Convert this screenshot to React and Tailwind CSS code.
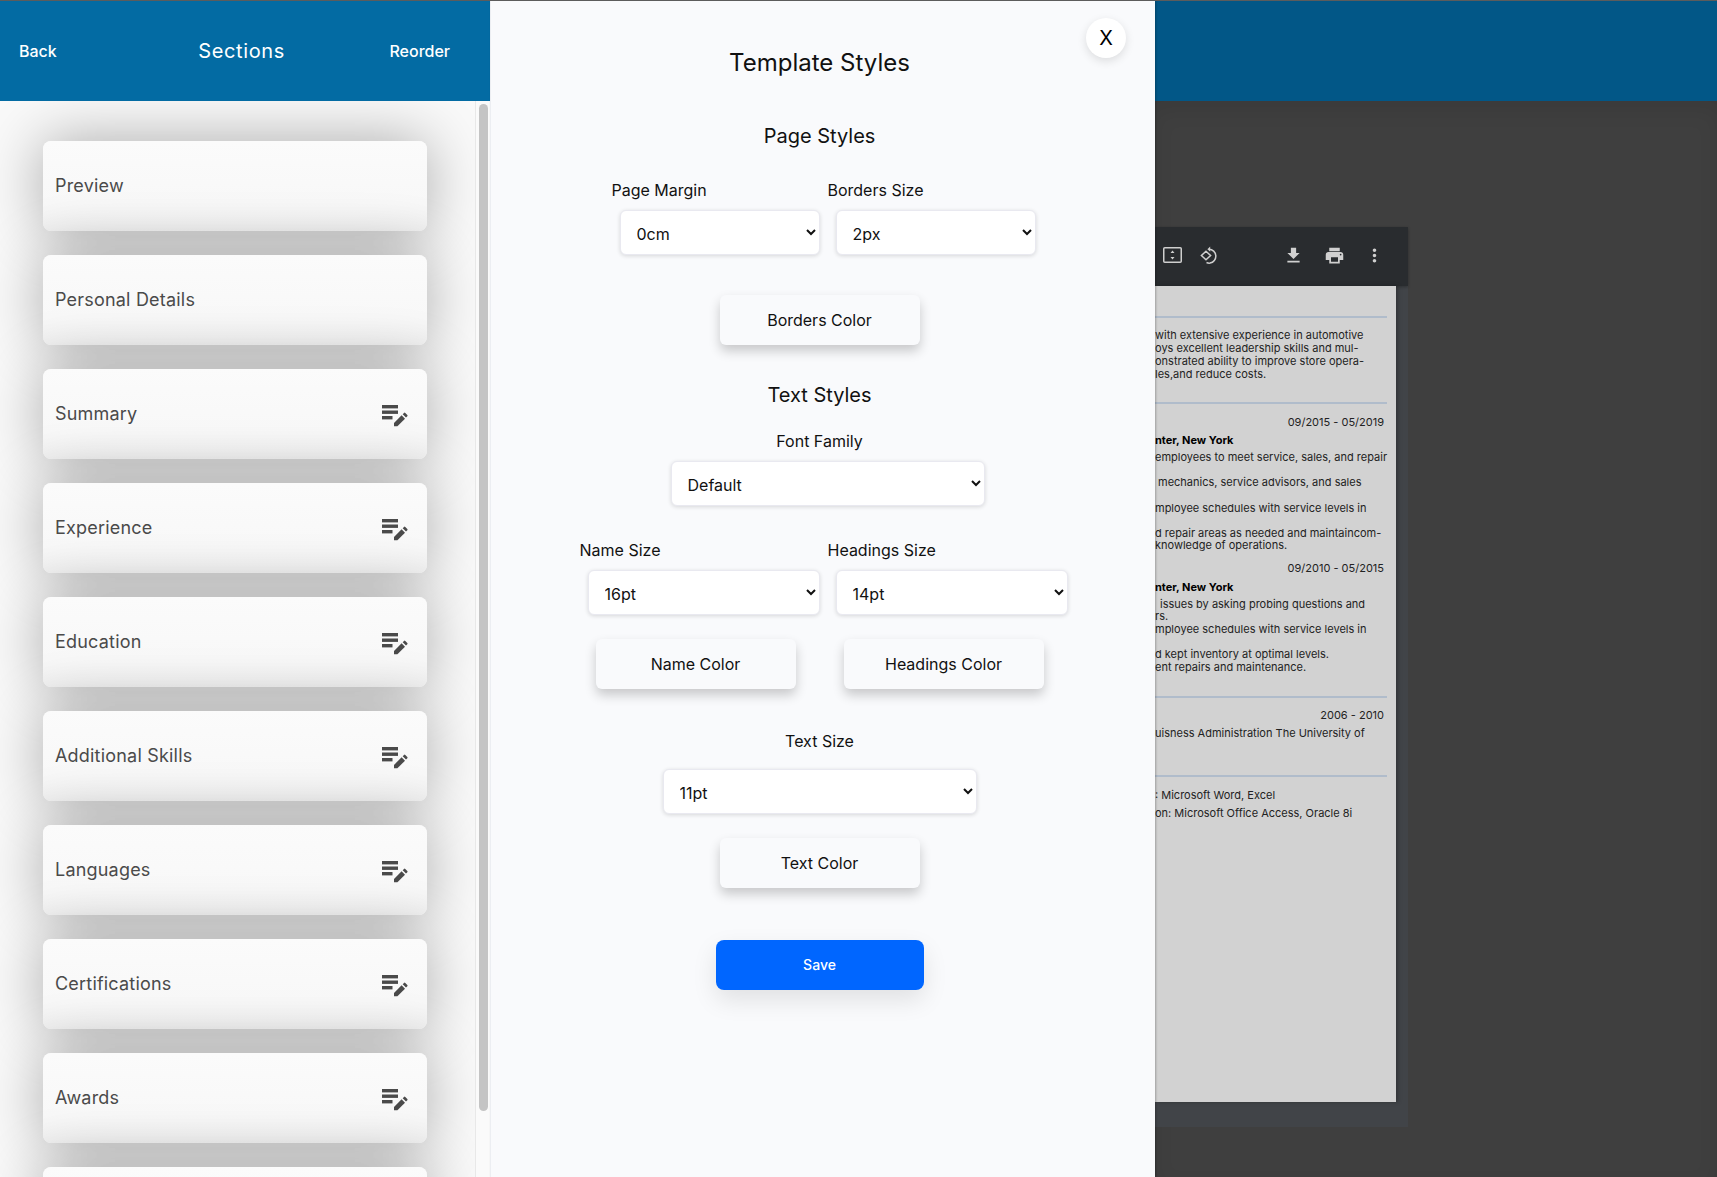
const sections = [
  ["Preview", false],
  ["Personal Details", false],
  ["Summary", true],
  ["Experience", true],
  ["Education", true],
  ["Additional Skills", true],
  ["Languages", true],
  ["Certifications", true],
  ["Awards", true],
  ["", false],
];

function EditNote() {
  return (
    <svg width="27" height="22" viewBox="0 0 27 22" fill="#4a4a4a">
      <rect x="0" y="0" width="16" height="3.4" />
      <rect x="0" y="5.5" width="16" height="3.4" />
      <rect x="0" y="11" width="10.5" height="3.4" />
      <path d="M12 21.3v-3.4l7.6-7.6 3.4 3.4-7.6 7.6z" />
      <path d="M20.7 9.2l1.3-1.3a.9.9 0 0 1 1.3 0l2 2a.9.9 0 0 1 0 1.3L24 12.5z" />
    </svg>
  );
}

function Card({ label, icon }) {
  return (
    <div className="w-[384px] h-[90px] shrink-0 rounded-[8px] bg-[linear-gradient(180deg,#fbfbfb_0%,#f8f8f8_70%,#f2f2f2_100%)] shadow-[0_0_60px_rgba(0,0,0,0.32)] flex items-center justify-between pl-[12px] pr-[18px]">
      <span className="text-[18px] text-[#4a4a4a] tracking-[0.2px] mb-[1px]">{label}</span>
      {icon && <span className="mt-[4px]"><EditNote /></span>}
    </div>
  );
}

function Field({ value, className }) {
  return (
    <select defaultValue={value} className={`h-[45px] bg-white rounded-[6px] border border-[#e9e9f0] shadow-[0_1px_4px_rgba(0,0,0,0.14)] pl-[12px] pt-[2px] text-[16px] text-[#111] ${className}`}>
      <option value={value}>{value}</option>
    </select>
  );
}

function ColorButton({ children }) {
  return (
    <button className="w-[200px] h-[50px] rounded-[6px] bg-[#f9fafc] text-[16px] text-[#111] shadow-[0_6px_12px_rgba(0,0,0,0.2)]">
      {children}
    </button>
  );
}

function FitIcon() {
  return (
    <svg width="19" height="16" viewBox="0 0 19 16" fill="none">
      <rect x="0.75" y="0.75" width="17.5" height="14.5" rx="1" stroke="#cfcfcf" strokeWidth="1.5" />
      <path d="M9.5 3.5l2 2.5h-4zM9.5 12.5l2-2.5h-4z" fill="#cfcfcf" />
    </svg>
  );
}

function RotateIcon() {
  return (
    <svg width="18" height="18" viewBox="0 0 18 18" fill="none" stroke="#cfcfcf" strokeWidth="1.5">
      <path d="M6 5.2L10.6 9.5 6 13.8 1.4 9.5z" />
      <path d="M9 3.2a7 7 0 0 1 1 13.9 7 7 0 0 1-3.5-.6" />
      <path d="M10.2 0.6L7.4 3.2l2.8 2.6" fill="#cfcfcf" stroke="none" />
    </svg>
  );
}

function MaterialIcon({ d }) {
  return (
    <svg width="21" height="21" viewBox="0 0 24 24" fill="#d0d0d0">
      <path d={d} />
    </svg>
  );
}

function Rule({ className }) {
  return <div className={`h-[2px] w-[232px] bg-[#b0bccb] ${className}`} />;
}

function Line({ className, children }) {
  return <div className={`h-[12px] leading-[12px] whitespace-nowrap ${className}`}>{children}</div>;
}

export default function App() {
  return (
    <div className="w-[1717px] h-[1177px] overflow-hidden flex border-t border-[#5c5c5c] bg-[#3f3f3f] font-[Inter,sans-serif]">
      {/* Sections panel */}
      <aside className="w-[490px] h-full shrink-0 flex flex-col bg-[#f9f9f9]">
        <header className="h-[100px] shrink-0 bg-[#036ba3] text-white flex items-center justify-between pl-[19px] pr-[40px] pb-[1px]">
          <span className="text-[16px] font-medium">Back</span>
          <span className="text-[20px] font-normal tracking-[0.6px] ml-[37px]">Sections</span>
          <span className="text-[16px] font-medium">Reorder</span>
        </header>
        <div className="flex-1 min-h-0 flex">
          <div className="w-[475px] overflow-hidden flex flex-col gap-[24px] pt-[40px] pl-[43px]">
            {sections.map(([label, icon], i) => (
              <Card key={i} label={label} icon={icon} />
            ))}
          </div>
          <div className="w-[15px] border-l border-[#e8e8e8] bg-[#fafafa] pl-[3px] pt-[3px]">
            <div className="w-[9px] h-[1007px] rounded-full bg-[#c4c4c4]" />
          </div>
        </div>
      </aside>

      {/* Template styles modal */}
      <main className="relative w-[665px] h-full shrink-0 bg-[#f9fafc] border-l border-[#eceef2] flex flex-col items-center pr-[7px] pt-[46px] text-[#111] shadow-[1px_0_2px_rgba(0,0,0,0.25)] z-10">
        <button className="absolute top-[17px] right-[29px] w-[40px] h-[40px] rounded-full bg-white text-[20px] text-black shadow-[0_3px_10px_rgba(0,0,0,0.12)]">X</button>
        <h1 className="text-[24px] leading-[32px] font-normal">Template Styles</h1>
        <h2 className="mt-[43px] text-[20px] leading-[28px]">Page Styles</h2>
        <div className="mt-[28px] ml-[8px] flex gap-[8px]">
          <div className="flex flex-col">
            <label className="text-[16px] leading-[24px]">Page Margin</label>
            <Field value="0cm" className="mt-[8px] ml-[8px] w-[200px]" />
          </div>
          <div className="flex flex-col">
            <label className="text-[16px] leading-[24px]">Borders Size</label>
            <Field value="2px" className="mt-[8px] ml-[8px] w-[200px]" />
          </div>
        </div>
        <div className="mt-[40px]"><ColorButton>Borders Color</ColorButton></div>
        <h2 className="mt-[36px] text-[20px] leading-[28px]">Text Styles</h2>
        <label className="mt-[20px] text-[16px] leading-[24px]">Font Family</label>
        <Field value="Default" className="mt-[8px] ml-[16px] w-[314px]" />
        <div className="mt-[32px] ml-[8px] flex gap-[8px]">
          <div className="flex flex-col">
            <label className="text-[16px] leading-[24px]">Name Size</label>
            <Field value="16pt" className="mt-[8px] ml-[8px] w-[232px]" />
          </div>
          <div className="flex flex-col">
            <label className="text-[16px] leading-[24px]">Headings Size</label>
            <Field value="14pt" className="mt-[8px] ml-[8px] w-[232px]" />
          </div>
        </div>
        <div className="mt-[24px] flex gap-[48px]">
          <ColorButton>Name Color</ColorButton>
          <ColorButton>Headings Color</ColorButton>
        </div>
        <label className="mt-[40px] text-[16px] leading-[24px]">Text Size</label>
        <Field value="11pt" className="mt-[16px] w-[314px]" />
        <div className="mt-[24px]"><ColorButton>Text Color</ColorButton></div>
        <button className="mt-[52px] w-[208px] h-[50px] pb-[1px] rounded-[8px] bg-[#0066ff] text-white text-[14px] font-medium shadow-[0_10px_25px_rgba(0,0,0,0.1)]">Save</button>
      </main>

      {/* Preview */}
      <section className="flex-1 min-w-0 flex flex-col">
        <div className="h-[100px] shrink-0 bg-[#025787]" />
        <div className="flex-1 bg-[#3f3f3f] shadow-[inset_0_10px_20px_rgba(0,0,0,0.08)] pt-[126px]">
          <div className="w-[253px] h-[900px] bg-[#414448] flex flex-col">
            <div className="h-[59px] shrink-0 bg-[#292c2f] flex items-center pl-[8px] pb-[3px] shadow-[0_1px_3px_rgba(0,0,0,0.3)]">
              <FitIcon />
              <span className="ml-[18px]"><RotateIcon /></span>
              <span className="ml-[65px]"><MaterialIcon d="M19 9h-4V3H9v6H5l7 7 7-7zM5 18v2h14v-2H5z" /></span>
              <span className="ml-[20px]"><MaterialIcon d="M19 8H5c-1.66 0-3 1.34-3 3v6h4v4h12v-4h4v-6c0-1.66-1.34-3-3-3zm-3 11H8v-5h8v5zm3-7c-.55 0-1-.45-1-1s.45-1 1-1 1 .45 1 1-.45 1-1 1zm-1-9H6v4h12V3z" /></span>
              <span className="ml-[19px]"><MaterialIcon d="M12 8c1.1 0 2-.9 2-2s-.9-2-2-2-2 .9-2 2 .9 2 2 2zm0 2c-1.1 0-2 .9-2 2s.9 2 2 2 2-.9 2-2-.9-2-2-2zm0 6c-1.1 0-2 .9-2 2s.9 2 2 2 2-.9 2-2-.9-2-2-2z" /></span>
            </div>
            <div className="w-[241px] h-[816px] bg-[#d2d2d2] shadow-[2px_0_4px_rgba(0,0,0,0.25)] overflow-hidden text-[11px] text-[#222] pt-[30px]">
              <Rule />
              <Line className="mt-[11px]">with extensive experience in automotive</Line>
              <Line className="mt-[1px]">oys excellent leadership skills and mul-</Line>
              <Line className="mt-[1px]">onstrated ability to improve store opera-</Line>
              <Line className="mt-[1px]">les,and reduce costs.</Line>
              <Rule className="mt-[22px]" />
              <Line className="mt-[12px] text-right pr-[12px]">09/2015 - 05/2019</Line>
              <Line className="mt-[6px] font-bold text-black">nter, New York</Line>
              <Line className="mt-[5px]">employees to meet service, sales, and repair</Line>
              <Line className="mt-[13px] pl-[3px]">mechanics, service advisors, and sales</Line>
              <Line className="mt-[14px]">mployee schedules with service levels in</Line>
              <Line className="mt-[13px]">d repair areas as needed and maintaincom-</Line>
              <Line className="mt-[0px]">knowledge of operations.</Line>
              <Line className="mt-[11px] text-right pr-[12px]">09/2010 - 05/2015</Line>
              <Line className="mt-[7px] font-bold text-black">nter, New York</Line>
              <Line className="mt-[5px] pl-[5px]">issues by asking probing questions and</Line>
              <Line className="mt-[0px]">rs.</Line>
              <Line className="mt-[1px]">mployee schedules with service levels in</Line>
              <Line className="mt-[13px]">d kept inventory at optimal levels.</Line>
              <Line className="mt-[1px]">ent repairs and maintenance.</Line>
              <Rule className="mt-[23px]" />
              <Line className="mt-[11px] text-right pr-[12px]">2006 - 2010</Line>
              <Line className="mt-[6px]">uisness Administration The University of</Line>
              <Rule className="mt-[36px]" />
              <Line className="mt-[12px]">: Microsoft Word, Excel</Line>
              <Line className="mt-[6px]">on: Microsoft Office Access, Oracle 8i</Line>
            </div>
          </div>
        </div>
      </section>
    </div>
  );
}
